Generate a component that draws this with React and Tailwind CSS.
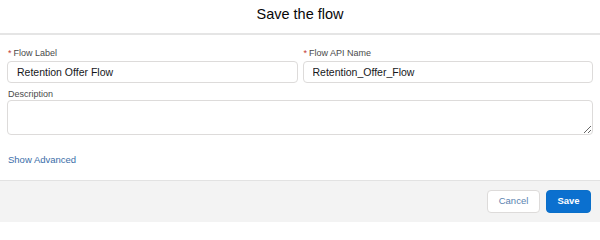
export default function App() {
  return (
    <div className="flex h-[222px] w-[600px] flex-col bg-white font-['Liberation_Sans',Arial,sans-serif] text-[#080707]">
      <div className="flex h-[35px] shrink-0 items-start justify-center border-b-2 border-[#e5e5e5] pt-[4px]">
        <h2 className="text-[14.5px] leading-[20px]">Save the flow</h2>
      </div>

      <div className="flex-1 px-[7px] pt-[11px]">
        <div className="grid grid-cols-2 gap-x-[5px]">
          <Field label="Flow Label" value="Retention Offer Flow" required />
          <Field label="Flow API Name" value="Retention_Offer_Flow" required />
        </div>

        <label className="mt-[6px] block pl-[1px] text-[9px] leading-[11px] text-[#4a4a4a]">Description</label>
        <textarea
          className="block h-[35px] w-full resize-y rounded-[4px] border border-[#dddbda] bg-white px-[8px] text-[10px] outline-none"
          defaultValue=""
        />

        <a className="mt-[18px] block pl-[1px] text-[9.5px] leading-[14px] text-[#3b6ea8]">Show Advanced</a>
      </div>

      <div className="flex h-[42px] shrink-0 items-center justify-end gap-[6px] border-t border-[#e2e2e2] bg-[#f3f3f3] pr-[9px]">
        <button className="h-[23px] w-[53px] rounded-[4px] border border-[#dddbda] bg-white text-[9.5px] text-[#5a82b0]">
          Cancel
        </button>
        <button className="h-[23px] w-[45px] rounded-[4px] border border-[#0a6fc9] bg-[#0b70cf] text-[9.5px] font-bold text-white">
          Save
        </button>
      </div>
    </div>
  );
}

function Field({ label, value, required }) {
  return (
    <div>
      <label className="block pl-[1px] text-[9px] leading-[14px] text-[#4a4a4a]">
        {required && <span className="mr-[2px] text-[#c23934]">*</span>}
        {label}
      </label>
      <input
        className="mt-[1px] block h-[22px] w-full rounded-[4px] border border-[#dddbda] bg-white px-[9px] text-[10.5px] text-[#16171a] outline-none"
        defaultValue={value}
        readOnly
      />
    </div>
  );
}
